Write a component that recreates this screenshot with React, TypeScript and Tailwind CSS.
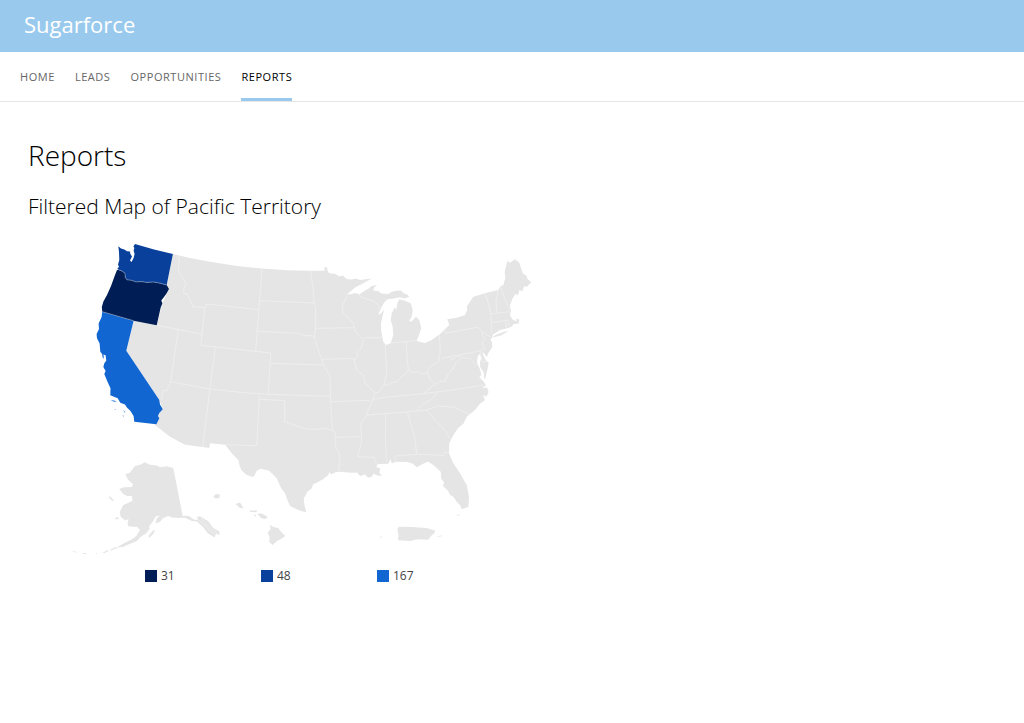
/**
 * Sugarforce reports page
 *
 * Brand bar, main navigation and the filtered territory map.
 */

const NAV_ITEMS = ["Home", "Leads", "Opportunities", "Reports"];

const LEGEND = [
  { value: 31, swatch: "bg-[#001e55]" },
  { value: 48, swatch: "bg-[#08409c]" },
  { value: 167, swatch: "bg-[#1166d1]" },
];

const WASHINGTON =
  "M118.3 246.3L121 248.6 124.3 249.6 127 251.2 130 251.5 130.4 254 132 256.5 130 260.5 131.5 262 133.6 258 134.6 254 133.6 250.5 134.4 248 133.4 246.6 135 244 154 249.6 172.9 254 166.7 285 160 283.2 153.3 281.9 147 282.4 141.7 281.6 136 281.9 131.7 280.3 127 279.8 125.3 277.5 125 273.3 122 271 118.3 269.7 117.4 268.3 119 267 118 264.5 119.3 260 119 252Z";
const OREGON =
  "M118.3 269.7L122 271 125 273.3 125.3 277.5 127 279.8 131.7 280.3 136 281.9 141.7 281.6 147 282.4 153.3 281.9 160 283.2 166.7 285 169 289 166.7 293.3 164 297 161.3 300.5 162.4 303.3 160.7 307.5 156.7 325.3 133.5 320.7 102.3 311.7 101.8 307 103.4 301.5 107 295 111 286 115 275 117 270Z";
const CALIFORNIA =
  "M102.3 311.7L133.6 320.7 126.3 350.7 159.3 400 160 404.5 162.8 409.3 159.3 413 158 416 159.3 418.3 156.4 424.3 134.3 421.7 133.6 416 130.5 411 126.7 407.3 125 404.6 120.3 402.8 117.7 398.3 110.3 395.3 110.5 388.3 107.6 382 104.3 374 105.6 371 103.4 367 104.2 363.5 106.3 360.5 105.6 355.3 103.5 354.4 103.8 359 102.5 357 102.2 354 100.3 351.7 99.6 343.5 97 338.3 96.6 334 99 329 98.6 323.5 101.6 317Z";

const MAINLAND =
  "M172.9 254L190 258 210 261.7 236.7 266 261.7 268.6 286.7 270.2 310 270.7 324.5 270.7 324.6 266.7 327 267.5 328 272.3 331 273.5 335 273.8 339.3 276.5 343 275.4 346.5 279 351.7 279.6 356 278.4 360 280 371.7 278.6 363.3 283.2 355 287.6 347.3 294.3 351 294.3 355 292.9 359.6 294.2 365 290.5 368 289 371.7 286 377.3 284.7 374 287.6 373.3 290.6 378 291 381.7 293.5 388.3 294 392 291.7 396.7 290.7 401 290.5 403.3 293 407 294.6 409.3 296.4 405 298.5 400 297.3 393.3 298.6 387.3 299.3 384 302.7 380.7 309 378.3 314.8 381 313.4 384.3 309.6 382.7 315 381 323.3 381.3 331.7 383.3 341.7 386 344.9 390.7 343.3 393.3 335 392.7 326.7 390.7 320 391.7 313.3 395 307.3 396.4 310 397.3 303.3 399.3 299.3 405 300.7 410.7 303.3 412.7 310 411.7 316.7 409.3 320.4 411 322 416 316.7 419.3 320 421.3 328.3 418.3 336.7 416.7 340.7 420 342 425 343 431.7 340 440 334 449.3 325 447.3 319.3 456.7 317.7 465 315 467.3 310 466.7 306.7 473.3 296.7 486.7 292.7 498.3 290 500 286.7 503.3 285 505.3 278.3 504.7 271.7 507.3 261 510 262.7 515 259.3 519.3 262.7 522.7 273.3 526.7 276 527.5 279 531.3 282.3 526.7 286.7 524 286.3 522.3 291.5 519.5 290 518 295 515.3 294 512.7 298.3 510 305 511 311.7 509.7 315 512.8 319.8 516.5 321.5 516.5 318.5 519.3 319.6 518.7 323.5 513.6 324 511.7 326.5 508.3 328 500 330 493 334.4 492 337.3 490.5 340 492 342.5 492.3 347 488.3 353.3 486.7 357.3 484.4 353.6 482.3 352.3 484 357 486.3 361 488.7 362.5 487.3 370 485.5 377.5 484.3 379.5 483.6 372 480.3 367.6 480 362 481.3 357.5 479.5 353.8 477.6 356.7 477 362.7 480 369.3 481.3 374.7 479.3 377.3 483 380.7 486 385.6 482 388 487 387.5 488.6 392 486.5 396.6 483 395 485 400.3 480 403.7 475 410 466.7 416.7 463.6 423.6 458 428.3 453.3 435 449.3 443.3 448.9 453.3 453.3 463.3 460 473.3 466.7 485 469 496.7 468.4 506.7 461.7 509.3 460.3 505.6 456.7 501.7 453.6 497 450 494.7 448 490.7 443 486 444 482.3 441.3 478.7 440.7 471.7 433.3 465 428.3 461.7 423.6 463.6 416.7 467.3 413 463.8 407 462 396.7 461.7 391.7 463.3 390.6 459 388.3 463.7 378.3 464 376 466.7 380.3 468.6 379.4 472.8 382 476 377 475.3 373.3 473.7 372 476.7 368 477.7 365 474.6 360 475.9 357 472.5 353.3 472.7 347 472.4 341.7 471.7 336 472 331 474.6 329.8 472 327.8 475.6 323 479.2 316.7 482.7 313.3 484.3 311.3 489 307.3 491.7 305.8 495 303.7 498.3 304.4 505 306.3 512.6 298.3 510 290 506 287.4 500 285 493.3 281 488 276.7 478.3 269.3 470.7 260.7 468.7 256.7 470.7 254.5 475.5 252.7 477 247 475 241.7 470.7 239.8 466.3 238.3 460 232 453.6 225 444.7 210 443.3 209.3 448 202.7 447 185 444.7 170 436.7 153.7 424 156.4 424.3 159.3 413 162.8 409.3 159.3 400 126.3 350.7 133.6 320.7 156.7 325.3 162.4 303.3 169 289 166.7 285Z";

const ALASKA =
  "M145 462.3L149 464.6 156.7 465.6 160 467.3 167 466.2 173.3 467.9 182.7 516 188.3 515.8 194 519.5 198 520 197 516.7 200 516.3 208.3 521.3 213 527.7 219.3 531.5 219.6 535.3 216 533.6 214.7 537.6 208 533.6 203 527 197 521.5 192 521 185 517.7 178.3 518 172 517.6 168.3 516 163 518.3 160 521.7 155.7 523.6 156.6 518.6 160 515.4 155.7 516.4 152.4 522.3 149.3 526 149.4 529.3 146 533.6 140 537.3 137 541 128.3 544.6 123 547 116.7 547.4 123 543.8 131.7 539.6 136.4 536 140 530 137 526.7 133 526.7 128.3 526.3 127.6 523 128.6 519 125 520.6 120.7 516.7 119.7 512 121.7 508.3 123.3 505 129 502.6 132.4 500.7 132 496 127 496 123.3 494 119.3 488.9 124 487.3 132 487 133 484 128.3 480 125.3 474.3 130 472.6 135 466 139.6 465Z";

const ISLANDS = [
  // aleutians, kodiak and bering sea
  "M108.3 497L110 496.6 114 500.6 112.3 501Z",
  "M115 518.3L118 516.8 118.6 519 116 519.4Z",
  "M148.3 536L153 530.5 155 530 153.6 533.6 149.6 537.7Z",
  "M110.3 549.6L116 547 117 548 111 550.6Z",
  "M102.7 552.8L107.6 550 108.6 551 104 553.3Z",
  "M95 553.6L97 553 97 554Z",
  "M82 553.3L86 553 86.6 554.3 83 554Z",
  "M71.3 550.6L77 552 76 552.8Z",
  // hawaii
  "M213.3 496.5L216 494 220 494.6 219.3 498 215.6 498.4Z",
  "M235.5 504L240 502.5 243.6 508.3 240 508Z",
  "M249.3 510.6L257.5 510.6 256 512.3 250 511.8Z",
  "M253.6 514.6L256.3 515 255.3 517Z",
  "M257.3 513.8L261.7 513.6 267.9 517 265.3 519 261.3 518.3Z",
  "M270 525L274 527.3 278.3 528 280.6 531.3 285.3 536 281 539 277 541 272.7 544.9 269.3 542.3 269.6 537 267.7 532.7 270.6 529Z",
  // puerto rico
  "M397.3 529L399 526.7 412 527 426.7 527.9 435 530.6 434.6 533 431 536 428.3 539.7 418 539.3 410 541 398 540.3 398.6 535.5Z",
  "M436 536.8L442 535.3 441 536.6Z",
  "M380.3 536.6L381.6 536.6 381.6 537.7 380.3 537.7Z",
  // long island and the keys
  "M491.6 337.7L496 334.7 505 331.5 508.6 331 501 335.6Z",
  "M456 515.4L461 513.4 458 515.8Z",
];

const CHANNEL_ISLANDS =
  "M110.6 400L113.6 400.3 117 401.6 114 402ZM114.6 409L116 409.4 115 410ZM123 410L125.6 412 124.6 412.6ZM122.6 414.6L124 416.6 123 416.6Z";

const BORDERS = [
  // northern rockies
  "M179.3 256L178.3 270 181 275.6 186 282.7 184 288 183.6 293.6 187 293.6 189.3 298.3 193.3 307.3 197 306.7 205 307.7",
  "M258.4 309.7L206.7 304 205 307.7 200.7 345.3 270.7 353",
  "M156.7 325.3L202.3 334.3",
  "M262 268.6L255.7 351.7",
  "M260 300.7L314.3 303",
  // great basin
  "M178.3 329.6L170.7 381.7 166.7 391 163 390 161.5 400",
  "M215.3 347L202.7 447",
  "M170.5 381.7L210 389 240 392.3 268.3 394.3 330 396.3",
  "M270.7 352.7L268.3 394.3",
  "M270.7 363.3L322.7 365",
  // plains
  "M310.7 270.7L312.7 286.7 314.3 303 315.7 308.3 315.7 327.3 314.3 337.3 318.3 350 321.7 359.3 323.6 365 328.3 372.7 330 376.7 330.6 401.7 332.3 430",
  "M257.3 331.3L298.3 333.3 305 335.7 311.7 335.7 314.3 337.3",
  "M315.7 328.3L354 327.7",
  "M321.7 359.3L353.3 358.5 355 360.6",
  "M225 444.7L256.7 445.7 259.4 395",
  "M259.3 399.3L284.7 400.7 284.7 421.7 290 423.3 300 427.3 308 429 316.7 429.3 326.7 428.3 335 431.7 335.7 446.7 339.3 453.3 340 460 338.3 471",
  "M330.7 401.7L370 400.3",
  "M335.7 437.3L360.7 436.7",
  // mississippi
  "M347.3 294.3L346 299 342.3 305 343.3 313.3 348 317.3 353.3 323.3 355.7 331.7 363.3 340 361.7 347.3 356.7 351.7 358.3 356.7 355 358.7 354.6 363 356.7 370 363.3 375 365 383.3 370.3 388 374.6 393.3 372.7 400 369 408 366.7 415 361.7 422 360.7 428.3 361.7 436.7 361 444 357.7 456.7 374 457.3 376.7 465",
  // midwest
  "M363.3 338L382 337.3",
  "M358.3 294.6L362 297.6 373.3 301 378.3 305 380.3 309",
  "M385.3 345L386.7 373.3 384 385",
  "M374.6 393.3L379 392 384 385 388.6 385 393.3 382.3 397 382 400 378.3 404 375 408.3 370 413 372.6 418.3 371.7 423 374 427.3 372.7 430 366.7 435 364 438.3 361.7 440.3 352 439.3 334",
  "M406 342L408.3 370",
  "M390.7 343L416.7 340.5",
  // mid-atlantic
  "M445 330L445 333.3 478.3 327.3 481.7 331.7 490.6 337",
  "M481.7 331.7L482.6 336 485 338.6 481.7 344 485 348.3 480 351 441.3 358.3",
  "M427.3 372.7L430 379 435 384.3 440 381 445 381.7 447.6 375 451.7 370 456 363 462 357.6 470 358.6 477 366",
  "M435 384.3L423.3 393.6",
  "M480 351L482.3 362.3 487.6 361",
  "M450 357L452 360 458 355.6 462 357.6",
  // northeast
  "M485.3 293.3L489.3 306.7 490.7 313.3 492 333.3",
  "M498.3 290L496 300 496.7 313.3",
  "M500 286.7L508.3 306.7 510 309",
  "M490.7 314L510 311.7",
  "M492 322.7L508.3 320 509 326",
  "M505.6 320.4L506.6 328",
  // south
  "M373.3 399.3L386 397.3 423.3 393.6 450 390.3 484 385",
  "M367.3 415L407 412 426.7 410 438.3 406 446 406.6 455 407.3 470 415",
  "M438.3 392.7L431 399.6 423 404 416.7 410.6",
  "M426.7 410L435 420 445 430 449.3 438.3",
  "M385.7 414L385.4 440 386.7 461.7",
  "M407.3 412L415 438.3 416.7 454.3 443.3 455.3 444.6 452.3 448.6 452.7",
  "M395 462L395 456 416.7 454.3",
];

function TerritoryMap() {
  return (
    <svg viewBox="64 236 480 324" className="block w-full" role="img" aria-label="Map of Pacific Territory">
      <g fill="#e5e5e5">
        <path d={MAINLAND} />
        <path d={ALASKA} />
        {ISLANDS.map((d) => (
          <path key={d} d={d} />
        ))}
      </g>
      <g fill="none" stroke="#f0f0f0" strokeWidth="0.8" strokeLinejoin="round">
        {BORDERS.map((d) => (
          <path key={d} d={d} />
        ))}
        <path d="M198 520L205 525 210 531 215 534M201 518L208 526 217 533" />
      </g>
      <path d={CALIFORNIA} fill="#1166d1" />
      <path d={CHANNEL_ISLANDS} fill="#5b98e0" />
      <path d={WASHINGTON} fill="#08409c" />
      <path d={OREGON} fill="#001e55" />
      <g fill="none" stroke="#8fa3c4" strokeWidth="0.6">
        <path d="M118.3 269.7L122 271 125 273.3 125.3 277.5 127 279.8 131.7 280.3 136 281.9 141.7 281.6 147 282.4 153.3 281.9 160 283.2 166.7 285" />
        <path d="M102.3 311.7L133.5 320.7" />
      </g>
    </svg>
  );
}

function Legend() {
  return (
    <ul className="flex pl-[81px] text-[12px] leading-4 text-[#444444]">
      {LEGEND.map(({ value, swatch }) => (
        <li key={value} className="flex w-[116px] items-center gap-1">
          <span className={`size-3 ${swatch}`} />
          {value}
        </li>
      ))}
    </ul>
  );
}

export default function App() {
  return (
    <div className="min-h-screen bg-white font-['Open_Sans',sans-serif] text-black">
      <header className="flex h-[52px] items-center bg-[#99caee] px-6 pb-1">
        <span className="text-[22px] leading-8 text-white">Sugarforce</span>
      </header>

      <nav className="flex h-[50px] gap-5 border-b border-[#e6e6e6] px-5">
        {NAV_ITEMS.map((item) => (
          <a
            key={item}
            href="#"
            aria-current={item === "Reports" ? "page" : undefined}
            className={
              item === "Reports"
                ? "flex items-center border-b-3 border-[#99caee] pt-1 text-[11px] uppercase tracking-wider text-black"
                : "flex items-center border-b-3 border-transparent pt-1 text-[11px] uppercase tracking-wider text-[#666666]"
            }
          >
            {item}
          </a>
        ))}
      </nav>

      <main className="px-7 pt-8">
        <h1 className="text-[28px] font-light leading-[42px]">Reports</h1>
        <h2 className="mt-3 text-[21px] font-light leading-9">Filtered Map of Pacific Territory</h2>
        <section className="ml-9 mt-3 max-w-[480px]">
          <TerritoryMap />
          <div className="mt-2">
            <Legend />
          </div>
        </section>
      </main>
    </div>
  );
}
